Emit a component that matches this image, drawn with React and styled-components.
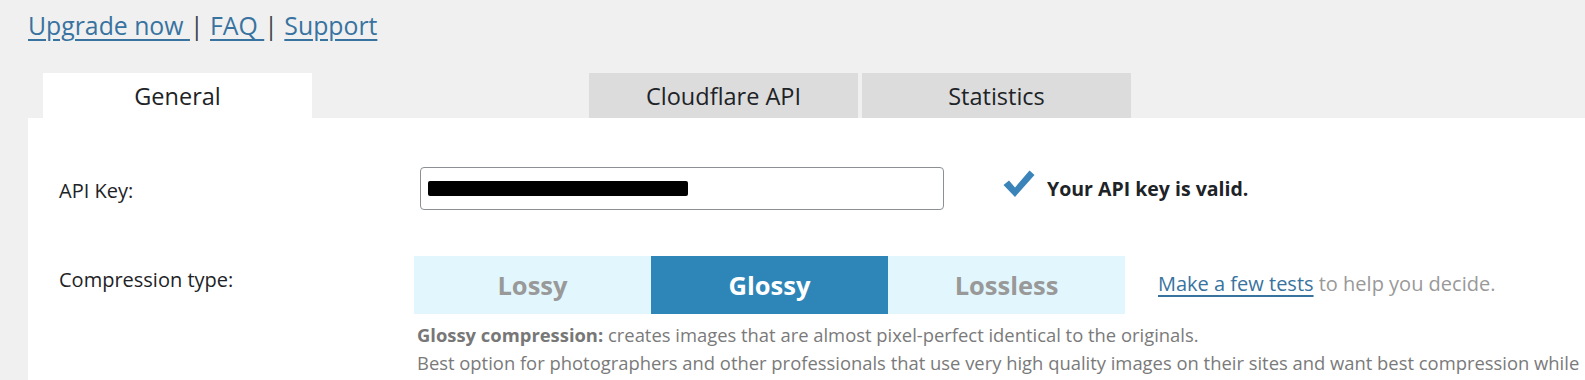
import React, {useState} from "react";
import styled, {createGlobalStyle} from "styled-components";

let Global = createGlobalStyle`
    body {
        margin: 0;
        background: #f0f0f0;
        font-family: "Open Sans", "Noto Sans", sans-serif;
        color: #1d2327;
    }
`
let Page = styled.div`
    width: 1585px;
    height: 380px;
    overflow: hidden;
`
let TopLinks = styled.div`
    padding: 7px 0 0 28px;
    height: 67px;
    box-sizing: border-box;
    font-size: 24.8px;
    color: #3c434a;
    line-height: 36px;
`
let Link = styled.a`
    color: #3873a0;
    text-decoration: underline;
    text-underline-offset: 4px;
    cursor: pointer;
`
let Tabs = styled.div`
    display: flex;
    padding-left: 43px;
    padding-top: 6px;
`
let Tab = styled.div`
    width: 269px;
    height: 45px;
    margin-right: ${(props) => props.gap || 4}px;
    display: flex;
    align-items: center;
    justify-content: center;
    font-size: 23.5px;
    color: #1d2327;
    background: ${(props) => props.active ? "#fff" : "#dcdcdc"};
    cursor: pointer;
`
let Panel = styled.div`
    margin-left: 28px;
    background: #fff;
    padding: 49px 0 0 31px;
    height: 300px;
`
let Row = styled.div`
    display: grid;
    grid-template-columns: 355px 1fr;
    align-items: ${(props) => props.top ? "start" : "center"};
    margin-bottom: ${(props) => props.mb || 0}px;
`
let Label = styled.div`
    font-size: 20px;
    color: #1d2327;
    padding-top: ${(props) => props.pt || 0}px;
`
let Field = styled.div`
    display: flex;
    align-items: center;
`
let KeyBox = styled.div`
    width: 524px;
    height: 43px;
    margin-left: 6px;
    box-sizing: border-box;
    border: 1px solid #8c8f94;
    border-radius: 4px;
    padding-left: 7px;
    display: flex;
    align-items: center;
`
let Redacted = styled.div`
    width: 260px;
    height: 15px;
    background: #000;
    border-radius: 2px;
`
let Valid = styled.div`
    display: flex;
    align-items: center;
    margin-left: 59px;
    font-size: 19.5px;
    font-weight: 700;
    color: #1d2327;
    gap: 12px;
    svg {
        margin-top: -10px;
    }
`
let Segments = styled.div`
    display: flex;
`
let Segment = styled.div`
    width: 237px;
    height: 58px;
    display: flex;
    align-items: center;
    justify-content: center;
    font-size: 25.5px;
    font-weight: 700;
    color: ${(props) => props.active ? "#fff" : "#999"};
    background: ${(props) => props.active ? "#2e86b8" : "#e2f7fd"};
    cursor: pointer;
`
let Hint = styled.div`
    margin: -4px 0 0 33px;
    font-size: 20px;
    color: #999;
`
let Desc = styled.div`
    margin: 7px 0 0 3px;
    font-size: 18.4px;
    line-height: 28px;
    color: #7a7a7a;
    white-space: nowrap;
    b {
        font-weight: 700;
        color: #777;
    }
`

let Check = () => (
    <svg width="32" height="30" viewBox="0 0 32 28">
        <path d="M0.5 15 L6 10.5 L12 17.5 L26.5 0.5 L31.5 5 L12 27 Z" fill="#3b84ba"/>
    </svg>
)

let types = ["Lossy", "Glossy", "Lossless"]

export default function App() {
    let [type, setType] = useState("Glossy");
    return (
        <Page>
            <Global/>
            <TopLinks>
                <Link>Upgrade now </Link>| <Link>FAQ </Link>| <Link>Support</Link>
            </TopLinks>
            <Tabs>
                <Tab active gap={277}>General</Tab>
                <Tab>Cloudflare API</Tab>
                <Tab>Statistics</Tab>
            </Tabs>
            <Panel>
                <Row mb={46}>
                    <Label pt={4}>API Key:</Label>
                    <Field>
                        <KeyBox><Redacted/></KeyBox>
                        <Valid><Check/>Your API key is valid.</Valid>
                    </Field>
                </Row>
                <Row top>
                    <Label pt={10}>Compression type:</Label>
                    <div>
                        <Field>
                            <Segments>
                                {types.map((t) =>
                                    <Segment key={t} active={type === t} onClick={() => setType(t)}>{t}</Segment>
                                )}
                            </Segments>
                            <Hint><Link>Make a few tests</Link> to help you decide.</Hint>
                        </Field>
                        <Desc>
                            <b>Glossy compression:</b> creates images that are almost pixel-perfect identical to the originals.<br/>
                            Best option for photographers and other professionals that use very high quality images on their sites and want best compression while
                        </Desc>
                    </div>
                </Row>
            </Panel>
        </Page>
    );
}
